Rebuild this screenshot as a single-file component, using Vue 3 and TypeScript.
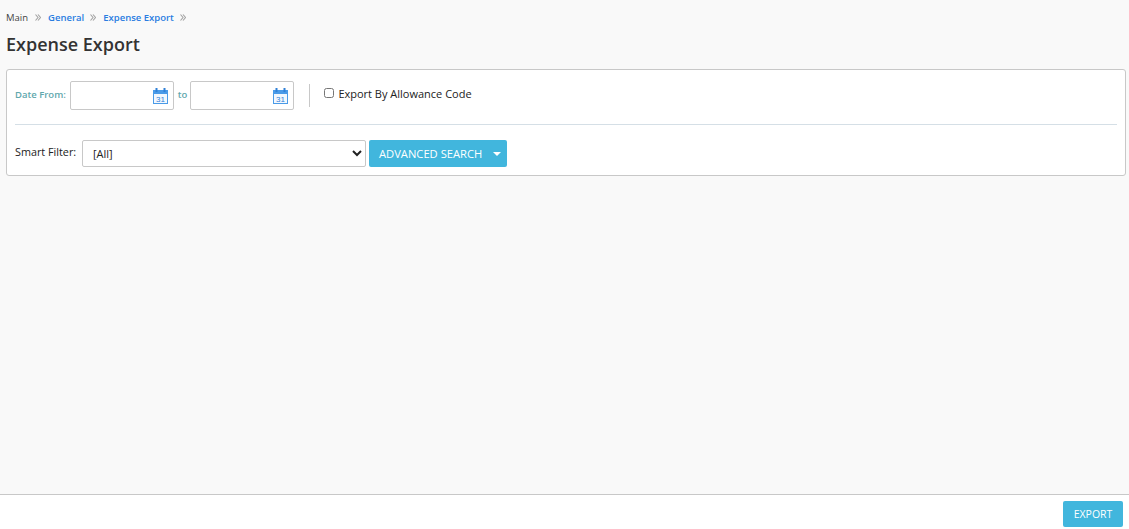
<script setup lang="ts">
const crumbs: { label: string; link: boolean }[] = [
  { label: 'Main', link: false },
  { label: 'General', link: true },
  { label: 'Expense Export', link: true },
]
</script>

<template>
  <div class="page">
    <main class="content">
      <nav class="crumbs">
        <template v-for="c in crumbs" :key="c.label">
          <span :class="c.link ? 'link' : 'plain'">{{ c.label }}</span>
          <svg class="sep" width="6" height="7" viewBox="0 0 6 7" fill="none" stroke="#a3a3a3" stroke-width="1.1">
            <path d="M0.5 0.5 L3 3.5 L0.5 6.5" />
            <path d="M3 0.5 L5.5 3.5 L3 6.5" />
          </svg>
        </template>
      </nav>
      <h1 class="title">Expense Export</h1>
      <section class="panel">
        <div class="row-top">
          <span class="lbl from">Date From:</span>
          <div class="date">
            <svg class="cal" width="15" height="16" viewBox="0 0 15 16">
              <rect x="0" y="2" width="15" height="14" fill="#4a9be8" />
              <rect x="1" y="6" width="13" height="9" fill="#f2f8fe" />
              <rect x="2.5" y="0" width="2" height="4" fill="#2f80d8" />
              <rect x="10.5" y="0" width="2" height="4" fill="#2f80d8" />
              <text x="7.5" y="14" text-anchor="middle" class="cal-num">31</text>
            </svg>
          </div>
          <span class="lbl to">to</span>
          <div class="date">
            <svg class="cal" width="15" height="16" viewBox="0 0 15 16">
              <rect x="0" y="2" width="15" height="14" fill="#4a9be8" />
              <rect x="1" y="6" width="13" height="9" fill="#f2f8fe" />
              <rect x="2.5" y="0" width="2" height="4" fill="#2f80d8" />
              <rect x="10.5" y="0" width="2" height="4" fill="#2f80d8" />
              <text x="7.5" y="14" text-anchor="middle" class="cal-num">31</text>
            </svg>
          </div>
          <span class="divider"></span>
          <label class="check"><input type="checkbox" /><span>Export By Allowance Code</span></label>
        </div>
        <hr class="rule" />
        <div class="row-bottom">
          <span class="sf">Smart Filter:</span>
          <select class="select"><option>[All]</option></select>
          <button class="btn adv" type="button">
            <span>ADVANCED SEARCH</span><span class="caret"></span>
          </button>
        </div>
      </section>
    </main>
    <footer class="footer">
      <button class="btn export" type="button">EXPORT</button>
    </footer>
  </div>
</template>

<style>
html, body { margin: 0; padding: 0; }
</style>

<style scoped>
.page {
  width: 1129px;
  height: 529px;
  display: flex;
  flex-direction: column;
  background: #f9f9f9;
  font-family: "Open Sans", "Noto Sans", sans-serif;
  overflow: hidden;
}
.content { flex: 1; padding: 10px 3px 0 6px; }
.crumbs { display: flex; align-items: center; height: 14px; font-size: 9.5px; gap: 6px; }
.plain { color: #444; margin-right: 1px; }
.link { color: #2a7de1; font-weight: 600; }
.sep { margin-right: 1px; }
.title {
  margin: 8px 0 0;
  font-size: 18px;
  line-height: 24px;
  font-weight: 600;
  color: #333;
}
.panel {
  margin-top: 13px;
  height: 107px;
  box-sizing: border-box;
  background: #fff;
  border: 1px solid #c8c8c8;
  border-radius: 3px;
  padding: 11px 8px 0;
}
.row-top { display: flex; align-items: center; height: 29px; }
.lbl { font-size: 9.5px; font-weight: 600; color: #5fa8ad; margin-top: -2px; }
.from { margin-right: 4px; }
.to { margin-left: 4px; margin-right: 3px; }
.date {
  position: relative;
  width: 104px;
  height: 29px;
  box-sizing: border-box;
  background: #fff;
  border: 1px solid #c8c8c8;
  border-radius: 2px;
}
.cal { position: absolute; right: 5px; top: 6px; }
.cal-num { font-family: "Liberation Sans", sans-serif; font-size: 8px; fill: #2f80d8; }
.divider { width: 1px; height: 23px; background: #c8c8c8; margin: 0 14px 0 15px; }
.check { display: flex; align-items: center; font-size: 11px; color: #222; margin-top: -5px; }
.check input { width: 10px; height: 10px; margin: 0 4px 0 0; }
.rule { border: 0; border-top: 1px solid #d5dfe6; margin: 14px 0 0; }
.row-bottom { display: flex; align-items: center; margin-top: 15px; }
.sf { font-size: 10.8px; color: #222; width: 67px; margin-top: -4px; }
.select {
  width: 284px;
  height: 27px;
  box-sizing: border-box;
  padding: 0 6px;
  font-family: inherit;
  font-size: 11px;
  color: #222;
  background: #fff;
  border: 1px solid #c8c8c8;
  border-radius: 2px;
}
.btn {
  border: 0;
  background: #41b6dd;
  color: #fff;
  font-family: inherit;
  border-radius: 2px;
  padding: 0;
}
.adv {
  margin-left: 3px;
  width: 138px;
  height: 27px;
  font-size: 11.2px;
  display: flex;
  align-items: center;
  padding-left: 10px;
  box-sizing: border-box;
}
.caret {
  margin-left: 11px;
  border-left: 4px solid transparent;
  border-right: 4px solid transparent;
  border-top: 4px solid #fff;
}
.footer {
  height: 35px;
  box-sizing: border-box;
  background: #fff;
  border-top: 1px solid #c8c8c8;
  display: flex;
  justify-content: flex-end;
  padding: 6px 6px 0 0;
}
.export { width: 60px; height: 26px; font-size: 10.5px; }
</style>
